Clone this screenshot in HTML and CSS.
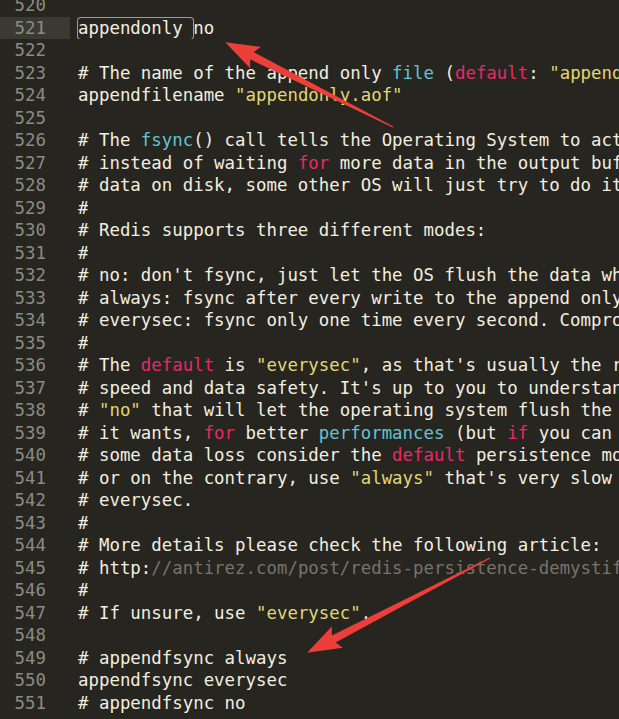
FILE: index.html
```html
<!DOCTYPE html>
<html lang="en">
<head>
    <meta charset="UTF-8">
    <title>redis.conf</title>
    <link rel="stylesheet" href="styles.css">
</head>
<body>
<div class="editor">
    <div class="line"><span class="num">520</span><span class="code"></span></div>
    <div class="line current"><span class="num">521</span><span class="code"><span class="match">appendonly </span>no</span></div>
    <div class="line"><span class="num">522</span><span class="code"></span></div>
    <div class="line"><span class="num">523</span><span class="code"># The name of the append only <span class="fn">file</span> (<span class="kw">default</span>: <span class="str">"appendonly.aof"</span>)</span></div>
    <div class="line"><span class="num">524</span><span class="code">appendfilename <span class="str">"appendonly.aof"</span></span></div>
    <div class="line"><span class="num">525</span><span class="code"></span></div>
    <div class="line"><span class="num">526</span><span class="code"># The <span class="fn">fsync</span>() call tells the Operating System to actually write data on disk</span></div>
    <div class="line"><span class="num">527</span><span class="code"># instead of waiting <span class="kw">for</span> more data in the output buffer. Some OS will really flush</span></div>
    <div class="line"><span class="num">528</span><span class="code"># data on disk, some other OS will just try to do it ASAP.</span></div>
    <div class="line"><span class="num">529</span><span class="code">#</span></div>
    <div class="line"><span class="num">530</span><span class="code"># Redis supports three different modes:</span></div>
    <div class="line"><span class="num">531</span><span class="code">#</span></div>
    <div class="line"><span class="num">532</span><span class="code"># no: don't fsync, just let the OS flush the data when it wants. Faster.</span></div>
    <div class="line"><span class="num">533</span><span class="code"># always: fsync after every write to the append only log. Slow, Safest.</span></div>
    <div class="line"><span class="num">534</span><span class="code"># everysec: fsync only one time every second. Compromise.</span></div>
    <div class="line"><span class="num">535</span><span class="code">#</span></div>
    <div class="line"><span class="num">536</span><span class="code"># The <span class="kw">default</span> is <span class="str">"everysec"</span>, as that's usually the right compromise between</span></div>
    <div class="line"><span class="num">537</span><span class="code"># speed and data safety. It's up to you to understand if you can relax this to</span></div>
    <div class="line"><span class="num">538</span><span class="code"># <span class="str">"no"</span> that will let the operating system flush the output buffer when</span></div>
    <div class="line"><span class="num">539</span><span class="code"># it wants, <span class="kw">for</span> better <span class="fn">performances</span> (but <span class="kw">if</span> you can live with the idea of</span></div>
    <div class="line"><span class="num">540</span><span class="code"># some data loss consider the <span class="kw">default</span> persistence mode that's snapshotting),</span></div>
    <div class="line"><span class="num">541</span><span class="code"># or on the contrary, use <span class="str">"always"</span> that's very slow but a bit safer than</span></div>
    <div class="line"><span class="num">542</span><span class="code"># everysec.</span></div>
    <div class="line"><span class="num">543</span><span class="code">#</span></div>
    <div class="line"><span class="num">544</span><span class="code"># More details please check the following article:</span></div>
    <div class="line"><span class="num">545</span><span class="code"># http:<span class="dim">//antirez.com/post/redis-persistence-demystified.html</span></span></div>
    <div class="line"><span class="num">546</span><span class="code">#</span></div>
    <div class="line"><span class="num">547</span><span class="code"># If unsure, use <span class="str">"everysec"</span>.</span></div>
    <div class="line"><span class="num">548</span><span class="code"></span></div>
    <div class="line"><span class="num">549</span><span class="code"># appendfsync always</span></div>
    <div class="line"><span class="num">550</span><span class="code">appendfsync everysec</span></div>
    <div class="line"><span class="num">551</span><span class="code"># appendfsync no</span></div>
</div>
<svg class="arrows" width="619" height="719" viewBox="0 0 619 719">
    <g transform="translate(393 127) rotate(-153.2)">
        <polygon points="0,-0.6 158,-4 154,-12 188,0 154,12 158,4 0,0.6"/>
    </g>
    <g transform="translate(490 558) rotate(152.6)">
        <polygon points="0,-0.6 176,-4 172,-12 206,0 172,12 176,4 0,0.6"/>
    </g>
</svg>
</body>
</html>
```

FILE: styles.css
```css
* {
    box-sizing: border-box;
}
html, body {
    margin: 0;
    padding: 0;
    background-color: #27251f;
    overflow: hidden;
}
body {
    position: relative;
    width: 619px;
    height: 719px;
}
.editor {
    margin-top: -6px;
    font-family: "DejaVu Sans Mono", "Liberation Mono", monospace;
    font-size: 17.4px;
    line-height: 22.5px;
    color: #f2eee0;
}
.line {
    display: flex;
    height: 22.5px;
    white-space: pre;
}
.num {
    flex: 0 0 70px;
    padding-right: 24px;
    text-align: right;
    color: #8c8b82;
}
.current .num {
    background-color: #3c3931;
}
.code {
    padding-left: 8px;
    overflow: hidden;
}
.match {
    display: inline-block;
    line-height: 21px;
    border-radius: 3px;
    box-shadow: 0 0 0 1px #a29e92;
}
.kw {
    color: #e8286a;
}
.fn {
    color: #62c3d2;
}
.str {
    color: #e2d676;
}
.dim {
    color: #77736a;
}
.arrows {
    position: absolute;
    left: 0;
    top: 0;
}
.arrows polygon {
    fill: #ec3f3a;
}
```
